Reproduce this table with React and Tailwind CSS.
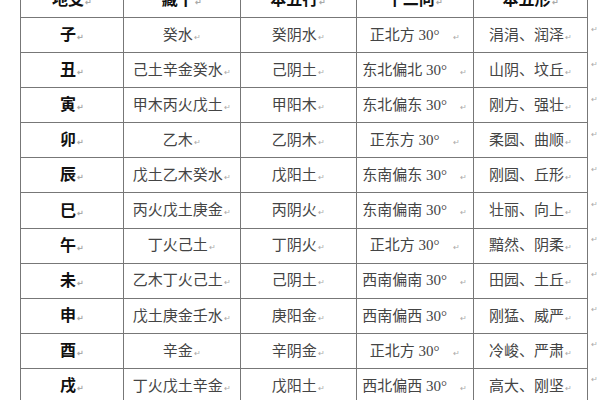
import React from "react";

const rows = [
  ["子", "癸水", "癸阴水", "正北方 30°", "涓涓、润泽"],
  ["丑", "己土辛金癸水", "己阴土", "东北偏北 30°", "山阴、坟丘"],
  ["寅", "甲木丙火戊土", "甲阳木", "东北偏东 30°", "刚方、强壮"],
  ["卯", "乙木", "乙阴木", "正东方 30°", "柔圆、曲顺"],
  ["辰", "戊土乙木癸水", "戊阳土", "东南偏东 30°", "刚圆、丘形"],
  ["巳", "丙火戊土庚金", "丙阴火", "东南偏南 30°", "壮丽、向上"],
  ["午", "丁火己土", "丁阴火", "正北方 30°", "黯然、阴柔"],
  ["未", "乙木丁火己土", "己阴土", "西南偏南 30°", "田园、土丘"],
  ["申", "戊土庚金壬水", "庚阳金", "西南偏西 30°", "刚猛、威严"],
  ["酉", "辛金", "辛阴金", "正北方 30°", "冷峻、严肃"],
  ["戌", "丁火戊土辛金", "戊阳土", "西北偏西 30°", "高大、刚坚"],
];

const headers = ["地支", "藏干", "本五行", "十二向", "本五形"];

function Mark() {
  return <span className="text-[8px] text-[#aaa] align-baseline ml-[1px]">↵</span>;
}

function Cell({ children, bold, gap }) {
  return (
    <td
      className={
        "border border-[#777] text-center align-middle p-0 " +
        (bold ? "font-bold text-[16px] text-[#111]" : "text-[15px] text-[#444]")
      }
    >
      {children}
      {gap ? <span className="inline-block w-[12px]" /> : null}
      <Mark />
    </td>
  );
}

export default function App() {
  return (
    <div
      className="w-[600px] h-[400px] overflow-hidden bg-white"
      style={{ fontFamily: '"Liberation Serif", "Noto Sans CJK SC", serif' }}
    >
      <table className="border-collapse ml-[20px] mt-[-18px] table-fixed">
        <colgroup>
          <col className="w-[103px]" />
          <col className="w-[117px]" />
          <col className="w-[116px]" />
          <col className="w-[117px]" />
          <col className="w-[115px]" />
          <col className="w-[12px]" />
        </colgroup>
        <tbody>
          <tr className="h-[35px]">
            {headers.map((h) => (
              <Cell key={h} bold>
                {h}
              </Cell>
            ))}
            <td className="p-0" />
          </tr>
          {rows.map((r, i) => (
            <tr key={i} className="h-[35.1px]">
              <Cell bold>{r[0]}</Cell>
              <Cell>{r[1]}</Cell>
              <Cell>{r[2]}</Cell>
              <Cell gap>{r[3]}</Cell>
              <Cell>{r[4]}</Cell>
              <td className="p-0 pl-[3px] align-top pt-[8px] text-[8px] text-[#aaa] leading-none">↵</td>
            </tr>
          ))}
        </tbody>
      </table>
    </div>
  );
}
